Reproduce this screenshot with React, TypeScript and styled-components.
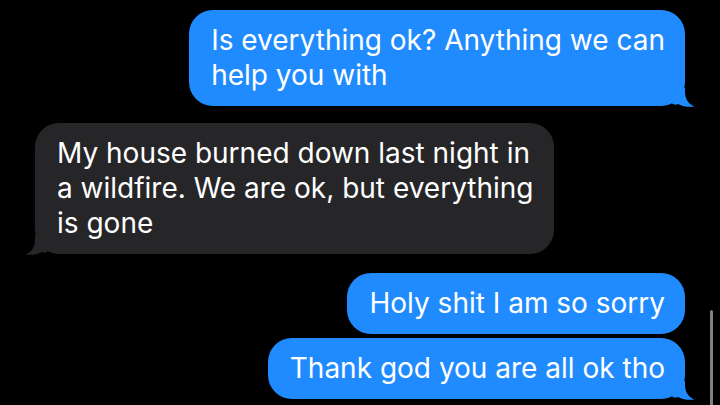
import React from "react";
import styled, { createGlobalStyle } from "styled-components";

const Global = createGlobalStyle`
  html, body { margin: 0; padding: 0; background: #000; overflow: hidden; }
  body { font-family: Inter, "Noto Sans", "Liberation Sans", sans-serif; }
`;

const Thread = styled.div`
  width: 720px;
  height: 405px;
  box-sizing: border-box;
  padding: 10px 35px 0 35px;
  display: flex;
  flex-direction: column;
  background: #000;
  position: relative;
`;

const Row = styled.div<{ $out: boolean; $gap: number }>`
  display: flex;
  justify-content: ${(p) => (p.$out ? "flex-end" : "flex-start")};
  margin-top: ${(p) => p.$gap}px;
`;

const Bubble = styled.div<{ $out: boolean }>`
  position: relative;
  background: ${(p) => (p.$out ? "#1f8bff" : "#262629")};
  color: #fff;
  border-radius: 24px;
  padding: 13px 20px 13px 22px;
  font-size: 28px;
  line-height: 35px;
  letter-spacing: 0;
  white-space: nowrap;
`;

const Line = styled.span`
  display: block;
`;

const Tail = styled.svg<{ $out: boolean }>`
  position: absolute;
  bottom: -1px;
  width: 25px;
  height: 19px;
  ${(p) =>
    p.$out
      ? "right: -10px;"
      : "left: -10px; transform: scaleX(-1);"}
`;

const Scrollbar = styled.div`
  position: absolute;
  right: 7px;
  top: 310px;
  width: 3px;
  height: 100px;
  border-radius: 2px;
  background: #808080;
`;

type Msg = { out: boolean; lines: string[]; gap: number; tail: boolean };

const messages: Msg[] = [
  { out: true, lines: ["Is everything ok? Anything we can", "help you with"], gap: 0, tail: true },
  {
    out: false,
    lines: ["My house burned down last night in", "a wildfire. We are ok, but everything", "is gone"],
    gap: 17,
    tail: true,
  },
  { out: true, lines: ["Holy shit I am so sorry"], gap: 19, tail: false },
  { out: true, lines: ["Thank god you are all ok tho"], gap: 4, tail: true },
];

function TailShape({ out, color }: { out: boolean; color: string }) {
  return (
    <Tail $out={out} viewBox="0 0 25 19">
      <path
        d="M15 0 L15 4 C15 11 18.5 16 24.5 18.6 C19 19.2 12.5 18.6 8 16 C6 17 4 17 2 15.6 L2 0 Z"
        fill={color}
      />
    </Tail>
  );
}

export default function App() {
  return (
    <>
      <Global />
      <Thread>
        {messages.map((m, i) => (
          <Row key={i} $out={m.out} $gap={m.gap}>
            <Bubble $out={m.out}>
              {m.lines.map((l, j) => (
                <Line key={j}>{l}</Line>
              ))}
              {m.tail && <TailShape out={m.out} color={m.out ? "#1f8bff" : "#262629"} />}
            </Bubble>
          </Row>
        ))}
        <Scrollbar />
      </Thread>
    </>
  );
}
